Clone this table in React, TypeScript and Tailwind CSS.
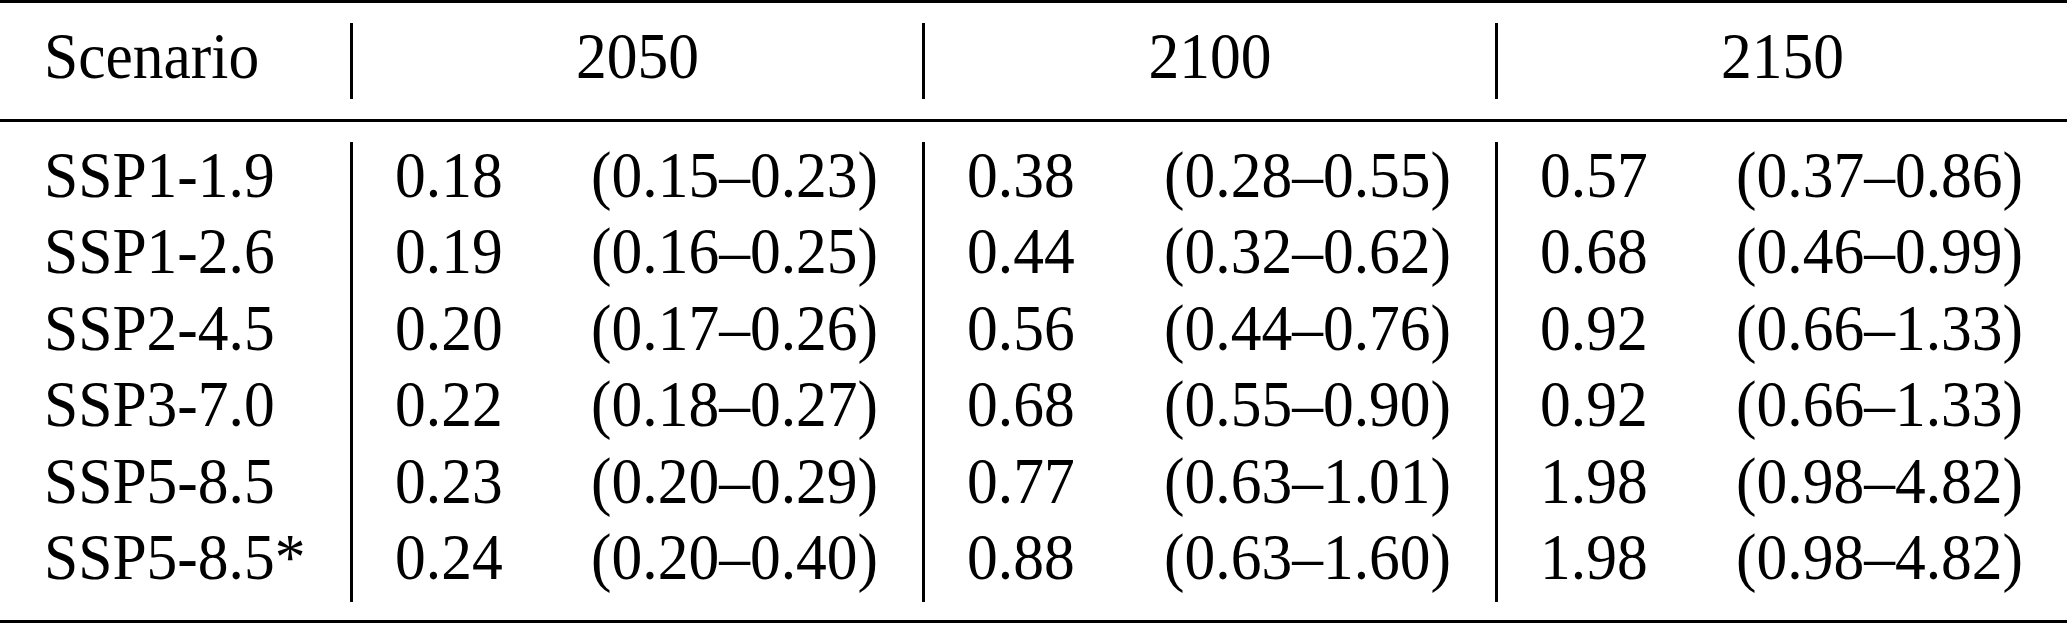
import React from "react";

type Row = {
  scenario: string;
  values: [string, string][];
};

const years = ["2050", "2100", "2150"];

const rows: Row[] = [
  { scenario: "SSP1-1.9", values: [["0.18", "(0.15–0.23)"], ["0.38", "(0.28–0.55)"], ["0.57", "(0.37–0.86)"]] },
  { scenario: "SSP1-2.6", values: [["0.19", "(0.16–0.25)"], ["0.44", "(0.32–0.62)"], ["0.68", "(0.46–0.99)"]] },
  { scenario: "SSP2-4.5", values: [["0.20", "(0.17–0.26)"], ["0.56", "(0.44–0.76)"], ["0.92", "(0.66–1.33)"]] },
  { scenario: "SSP3-7.0", values: [["0.22", "(0.18–0.27)"], ["0.68", "(0.55–0.90)"], ["0.92", "(0.66–1.33)"]] },
  { scenario: "SSP5-8.5", values: [["0.23", "(0.20–0.29)"], ["0.77", "(0.63–1.01)"], ["1.98", "(0.98–4.82)"]] },
  { scenario: "SSP5-8.5*", values: [["0.24", "(0.20–0.40)"], ["0.88", "(0.63–1.60)"], ["1.98", "(0.98–4.82)"]] },
];

// group widths so the bars land at 350 / 922 / 1495
const groupWidth = ["w-[572px]", "w-[573px]", "w-[572px]"];

const Rule = () => <div className="h-[3px] bg-black" />;

const App: React.FC = () => {
  return (
    <div className="w-[2067px] h-[625px] bg-white text-black font-['Liberation_Serif',serif] text-[61.5px] overflow-hidden">
      <Rule />

      {/* header */}
      <div className="py-[20px]">
        <div className="flex h-[76px]">
          <div className="w-[350px] pl-[44px]">
            <div className="-mt-[3.8px] leading-[76px] scale-y-[1.07] origin-[50%_59px]">Scenario</div>
          </div>
          {years.map((y, i) => (
            <div key={y} className={`${groupWidth[i]} border-l-[3px] border-black`}>
              <div className="-mt-[3.8px] leading-[76px] text-center scale-y-[1.07] origin-[50%_59px]">{y}</div>
            </div>
          ))}
        </div>
      </div>

      <Rule />

      {/* body */}
      <div className="pt-[20px] pb-[18px]">
        <div className="flex h-[460px]">
          <div className="w-[350px] pl-[44px]">
            <div className="-mt-[4px]">
              {rows.map((r) => (
                <div key={r.scenario} className="h-[76.4px] leading-[76.4px] whitespace-nowrap scale-y-[1.07] origin-[50%_59px]">
                  {r.scenario}
                </div>
              ))}
            </div>
          </div>
          {years.map((y, i) => (
            <div key={y} className={`${groupWidth[i]} border-l-[3px] border-black pl-[42px] pr-[44px]`}>
              <div className="-mt-[4px]">
                {rows.map((r) => (
                  <div key={r.scenario} className="flex justify-between h-[76.4px] leading-[76.4px] whitespace-nowrap scale-y-[1.07] origin-[50%_59px]">
                    <span>{r.values[i][0]}</span>
                    <span>{r.values[i][1]}</span>
                  </div>
                ))}
              </div>
            </div>
          ))}
        </div>
      </div>

      <Rule />
    </div>
  );
};

export default App;
